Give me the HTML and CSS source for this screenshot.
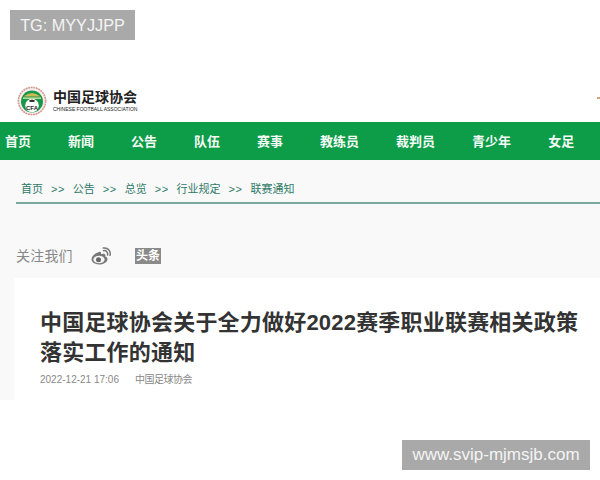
FILE: index.html
```html
<!DOCTYPE html>
<html>
<head>
<meta name="viewport" content="width=device-width, initial-scale=1">
<link rel="stylesheet" href="styles.css">
</head>

<body>
  <div class="tag tag-top">TG: MYYJJPP</div>

  <div class="header">
    <svg class="emblem" viewBox="0 0 30 30" width="30" height="30">
      <circle cx="15" cy="15" r="13.600" fill="#f8f0ee" stroke="#d29a92" stroke-width="1.600" stroke-dasharray="2 .6"/>
      <circle cx="15" cy="15.500" r="11" fill="#17974a"/>
      <path d="M6.500 10.500Q15 3.500 23.500 10.500z" fill="#c9bb55"/>
      <path d="M6 11.500h18v1.300H6z" fill="#eee8a8"/>
      <circle cx="15" cy="19.500" r="6.800" fill="#fff"/>
      <path d="M12 14.500l3-1 3 1-.8 1.600h-4.400z" fill="#333"/>
      <text x="15" y="23.500" class="emblem-text">CFA</text>
    </svg>
    <div class="brand">
      <div class="brand-cn">中国足球协会</div>
      <div class="brand-en">CHINESE FOOTBALL ASSOCIATION</div>
    </div>
    <span class="header-edge"></span>
  </div>

  <div class="nav">
    <a>首页</a>
    <a>新闻</a>
    <a>公告</a>
    <a>队伍</a>
    <a>赛事</a>
    <a>教练员</a>
    <a>裁判员</a>
    <a>青少年</a>
    <a>女足</a>
  </div>

  <div class="content">
    <div class="crumbs">
      <a>首页</a><span>&gt;&gt;</span>
      <a>公告</a><span>&gt;&gt;</span>
      <a>总览</a><span>&gt;&gt;</span>
      <a>行业规定</a><span>&gt;&gt;</span>
      <a>联赛通知</a>
    </div>

    <div class="follow">
      <span class="follow-label">关注我们</span>
      <svg class="weibo" viewBox="0 0 20 18" width="20" height="18">
        <path d="M8 5C4.200 6 .5 9.300 .5 12.300.5 15.300 4 17.500 8.200 17.500c4.800 0 8.300-2.700 8.300-5.300 0-1.500-1.300-2.300-2.300-2.600.6-1.700-.1-2.900-2-2.800-.8 0-1.600.3-2.100.5.300-1.500-.5-3.300-2.100-2.300z" fill="#777"/>
        <ellipse cx="8" cy="12.500" rx="5.600" ry="3.800" fill="#f4f4f4"/>
        <circle cx="7.500" cy="12.700" r="2.500" fill="#666"/>
        <path d="M12.500 3.700c2.700-.5 4.700 1.700 4 4.300M12.300 1c4.500-.8 7.800 3 6.700 7.200" fill="none" stroke="#777" stroke-width="1.500" stroke-linecap="round"/>
      </svg>
      <span class="toutiao">头条</span>
    </div>

    <div class="article">
      <h1>中国足球协会关于全力做好2022赛季职业联赛相关政策落实工作的通知</h1>
      <div class="meta">
        <span>2022-12-21 17:06</span>
        <span class="meta-source">中国足球协会</span>
      </div>
    </div>
  </div>

  <div class="tag tag-bottom">www.svip-mjmsjb.com</div>
</body>

</html>
```

FILE: styles.css
```css
body {
    margin: 0;
    background-color: #fff;
    font-family: "Liberation Sans", "Noto Sans CJK SC", sans-serif;
    overflow: hidden;
}

/* grey stamps that sit over the page */
.tag {
    position: absolute;
    height: 30px;
    line-height: 30px;
    background-color: #a9a9a9;
    color: #f4f4f4;
    text-align: center;
}

.tag-top {
    top: 10px;
    left: 10px;
    width: 125px;
    font-size: 16.25px;
}

.tag-bottom {
    top: 440px;
    left: 402px;
    width: 188px;
    font-size: 17px;
}

.header {
    height: 122px;
    box-sizing: border-box;
    padding: 86px 0 0 17px;
    display: flex;
    gap: 6px;
}

.emblem-text {
    font-size: 6px;
    font-weight: bold;
    text-anchor: middle;
    fill: #222;
}

.brand {
    padding-top: 3px;
    color: #222;
}

.brand-cn {
    font-size: 14px;
    line-height: 16px;
    font-weight: bold;
    white-space: nowrap;
}

.brand-en {
    font-size: 5px;
    line-height: 7px;
    margin-top: 1px;
    white-space: nowrap;
}

.header-edge {
    width: 3px;
    height: 2px;
    margin: 11px 0 0 auto;
    background-color: #c9a878;
}

.nav {
    height: 38px;
    box-sizing: border-box;
    padding: 0 0 2px 5px;
    display: flex;
    gap: 37px;
    align-items: center;
    background-color: #0d9c48;
    color: #f4fbf6;
    font-size: 13px;
    font-weight: bold;
    white-space: nowrap;
}

.content {
    height: 240px;
    background-color: #f9f9f9;
}

.crumbs {
    height: 44px;
    box-sizing: border-box;
    margin-left: 16px;
    padding: 22px 0 0 5px;
    border-bottom: 2px solid #7ba89c;
    display: flex;
    gap: 8px;
    font-size: 11px;
    line-height: 14px;
    color: #2e7a68;
}

.crumbs span {
    letter-spacing: .5px;
}

.follow {
    height: 74px;
    box-sizing: border-box;
    padding: 43px 0 0 16px;
    display: flex;
    align-items: flex-start;
}

.follow-label {
    width: 75px;
    font-size: 14px;
    letter-spacing: .2px;
    line-height: 18px;
    color: #888;
}

.weibo {
    margin-right: 24px;
}

.toutiao {
    width: 26px;
    height: 16px;
    line-height: 16px;
    margin-top: 1px;
    background-color: #8a8a8a;
    color: #fff;
    font-size: 12px;
    font-weight: bold;
    text-align: center;
}

.article {
    height: 122px;
    box-sizing: border-box;
    margin-left: 14px;
    padding: 30px 20px 0 26px;
    background-color: #fff;
}

h1 {
    margin: 0;
    font-size: 22px;
    letter-spacing: .2px;
    line-height: 30px;
    font-weight: bold;
    color: #333;
}

.meta {
    margin-top: 5px;
    display: flex;
    gap: 16px;
    font-size: 10px;
    line-height: 14px;
    color: #888;
}

.meta-source {
    letter-spacing: -.5px;
}
```
